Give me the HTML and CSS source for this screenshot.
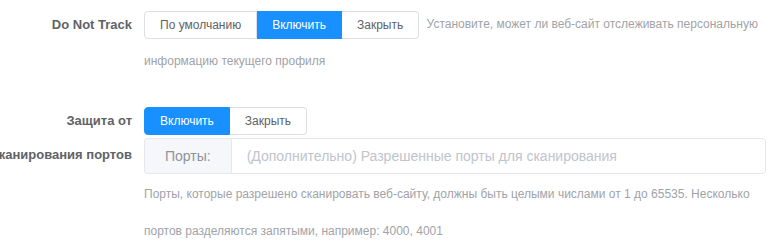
FILE: index.html
```html
<!DOCTYPE html>
<html>
<head>
    <meta charset="UTF-8">
    <title>Настройки профиля</title>
    <link rel="stylesheet" href="styles.css">
</head>
<body>
<div class="form">
    <div class="form-item">
        <label class="form-label">Do Not Track</label>
        <div class="form-content">
            <div class="radio-group">
                <span class="radio-btn">По умолчанию</span>
                <span class="radio-btn active">Включить</span>
                <span class="radio-btn">Закрыть</span>
            </div>
            <span class="help-inline">Установите, может ли веб-сайт отслеживать персональную информацию текущего профиля</span>
        </div>
    </div>

    <div class="form-item">
        <label class="form-label">Защита от сканирования портов</label>
        <div class="form-content">
            <div class="radio-line">
                <div class="radio-group">
                    <span class="radio-btn active">Включить</span>
                    <span class="radio-btn">Закрыть</span>
                </div>
            </div>
            <div class="input-group">
                <div class="input-prepend">Порты:</div>
                <input class="input" type="text" placeholder="(Дополнительно) Разрешенные порты для сканирования">
            </div>
            <div class="help">Порты, которые разрешено сканировать веб-сайту, должны быть целыми числами от 1 до 65535. Несколько портов разделяются запятыми, например: 4000, 4001</div>
        </div>
    </div>
</div>
</body>
</html>
```

FILE: styles.css
```css
body {
    margin: 0;
    padding-top: 6px;
    font-family: "Liberation Sans", Arial, sans-serif;
    background: #fff;
    overflow: hidden;
}

.form {
    margin-left: -16px;
    width: 782px;
}

.form-item {
    display: flex;
    margin-bottom: 23px;
}

.form-label {
    flex: 0 0 160px;
    box-sizing: border-box;
    padding: 1px 12px 0 0;
    text-align: right;
    font-size: 13px;
    font-weight: bold;
    line-height: 34px;
    color: #606266;
}

.form-item:first-child .form-label {
    padding-top: 0;
    line-height: 37px;
}

.form-content {
    flex: 1;
    min-width: 0;
    font-size: 12px;
    line-height: 37px;
}

.radio-line {
    line-height: 35px;
    height: 35px;
}

.radio-group {
    display: inline-flex;
    vertical-align: middle;
    line-height: 1;
}

.radio-btn {
    display: inline-block;
    padding: 7px 15px;
    font-size: 12px;
    line-height: 12px;
    color: #606266;
    background: #fff;
    border: 1px solid #dcdfe6;
    border-left: 0;
}

.radio-btn:first-child {
    border-left: 1px solid #dcdfe6;
    border-radius: 4px 0 0 4px;
}

.radio-btn:last-child {
    border-radius: 0 4px 4px 0;
}

.radio-btn.active {
    background: #1890ff;
    border-color: #1890ff;
    color: #fff;
}

.help-inline {
    margin-left: 4px;
    color: #a0a3a8;
}

.input-group {
    display: flex;
    height: 36px;
    width: 622px;
}

.input-prepend {
    padding: 0 20px;
    background: #f5f7fa;
    border: 1px solid #e4e7ed;
    border-right: 0;
    border-radius: 4px 0 0 4px;
    color: #909399;
    font-size: 14px;
    line-height: 34px;
}

.input {
    flex: 1;
    min-width: 0;
    box-sizing: border-box;
    height: 36px;
    padding: 0 15px;
    border: 1px solid #e4e7ed;
    border-radius: 0 4px 4px 0;
    font-family: inherit;
    font-size: 14px;
    color: #606266;
    outline: none;
}

.input::placeholder {
    color: #c0c4cc;
}

.help {
    padding-top: 2px;
    color: #a0a3a8;
    width: 610px;
}
```
